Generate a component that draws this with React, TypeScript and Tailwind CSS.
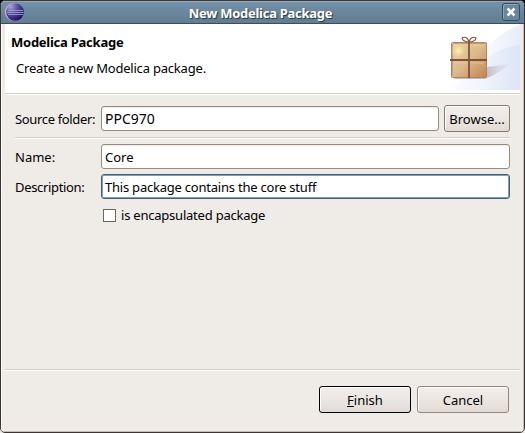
import React from "react";

function Field({ value, focused = false, className = "" }: { value: string; focused?: boolean; className?: string }) {
  return (
    <div
      className={
        "flex h-[25px] min-w-0 flex-1 items-center rounded-[3px] border bg-white pl-[3px] text-black " +
        (focused
          ? "border-[#475e72] shadow-[inset_0_0_0_1px_#7f9db5] "
          : "border-[#988b7d] shadow-[inset_0_1px_0_#eeebe7] ") +
        className
      }
    >
      {value}
    </div>
  );
}

function Button({ children, className }: { children: React.ReactNode; className: string }) {
  return (
    <div
      className={
        "flex h-[27px] items-center justify-center rounded-[3px] border bg-linear-to-b from-[#f1eeeb] via-[#ece7e3] to-[#e2dad4] shadow-[inset_1px_1px_0_#ffffff] " +
        className
      }
    >
      {children}
    </div>
  );
}

function Divider({ className = "" }: { className?: string }) {
  return <div className={"h-[2px] shrink-0 border-t border-[#d4d0c8] bg-white " + className} />;
}

function EclipseIcon() {
  return (
    <svg width="20" height="20" viewBox="0 0 20 20">
      <defs>
        <radialGradient id="orb" cx="0.25" cy="0.2" r="0.85">
          <stop offset="0" stopColor="#aaa4dc" />
          <stop offset="0.45" stopColor="#5a52a0" />
          <stop offset="1" stopColor="#1b1358" />
        </radialGradient>
      </defs>
      <circle cx="9.8" cy="10" r="9" fill="#c9a9d0" />
      <circle cx="11" cy="10" r="8.8" fill="url(#orb)" />
      <path d="M4 8.5h15M3 10.5h16.5M4 12.5h15" stroke="#a3a4e0" strokeWidth="0.8" />
    </svg>
  );
}

function PackageBanner() {
  return (
    <svg width="75" height="66" viewBox="0 0 75 66">
      <defs>
        <linearGradient id="sky" x1="0" x2="1">
          <stop offset="0" stopColor="#ffffff" />
          <stop offset="0.5" stopColor="#f5f8fd" />
          <stop offset="1" stopColor="#e6ecf9" />
        </linearGradient>
        <linearGradient id="wave" x1="0" x2="1">
          <stop offset="0" stopColor="#ffffff" />
          <stop offset="0.5" stopColor="#f1f4fc" />
          <stop offset="1" stopColor="#dce4f6" />
        </linearGradient>
        <linearGradient id="shade" gradientUnits="userSpaceOnUse" x1="40" y1="0" x2="66" y2="0">
          <stop offset="0" stopColor="#b3a2ae" />
          <stop offset="1" stopColor="#d5d5ea" stopOpacity="0.2" />
        </linearGradient>
        <linearGradient id="box" x1="0" y1="0" x2="1" y2="1">
          <stop offset="0" stopColor="#eed5a2" />
          <stop offset="0.5" stopColor="#dcb98c" />
          <stop offset="1" stopColor="#c28450" />
        </linearGradient>
        <radialGradient id="glow">
          <stop offset="0" stopColor="#fff4b4" />
          <stop offset="1" stopColor="#ead0a0" stopOpacity="0" />
        </radialGradient>
      </defs>
      <path d="M75 1C59 7 45 17 38 30L20 66H75Z" fill="url(#sky)" />
      <path d="M0 66C22 58 28 40 44 32C54 26 64 22 75 21V66Z" fill="url(#wave)" />
      <path d="M8 55H40C50 51 58 46 65 40L42 43Z" fill="url(#shade)" opacity="0.75" />
      <rect x="6.5" y="18.5" width="35" height="35" rx="1" fill="url(#box)" stroke="#ae8461" />
      <path d="M8 19.5H41M7.5 20V52" stroke="#c99c79" strokeWidth="1" />
      <path d="M9 21.5H22M26 21.5H39M9 39H22M26 39H39" stroke="#e9c9a3" strokeWidth="0.7" />
      <circle cx="13.5" cy="27" r="8" fill="url(#glow)" />
      <path d="M24 18V54M5 36H42" stroke="#81513f" strokeWidth="1.8" />
      <path d="M24 18C20 18 17 16 17 14C20 12 23 14 24 18C25 14 28 12 31 14C31 16 28 18 24 18" fill="#fff" stroke="#874f3d" strokeWidth="1.1" />
    </svg>
  );
}

export default function App() {
  return (
    <div className="h-[433px] w-[525px] bg-linear-to-b from-black from-50% to-[#efebe7] to-50% font-['Noto_Sans',sans-serif] text-[13px] leading-[18px] text-black">
      <div className="flex h-full flex-col overflow-hidden rounded-[5px] border border-[#3c3532] bg-[#efebe7]">
        <header className="flex h-[23px] shrink-0 items-center border-b border-[#3d4c57] bg-linear-to-b from-[#7692a8] via-[#6a879d] to-[#627d91] pr-[4px] pl-[3px] shadow-[inset_0_1px_0_#91a9ba]">
          <EclipseIcon />
          <div className="flex-1 pt-[2px] pr-[5px] text-center font-bold tracking-[-0.27px] text-white [text-shadow:1px_1px_1px_#263540]">
            New Modelica Package
          </div>
          <div className="flex size-[18px] items-center justify-center rounded-[3px] border border-[#344c5d] bg-[#68869c] shadow-[inset_1px_1px_0_#90a8b8]">
            <svg width="10" height="10" viewBox="0 0 10 10">
              <path d="M1.5 1.5L8.5 8.5M8.5 1.5L1.5 8.5" stroke="#fff" strokeWidth="2.5" />
            </svg>
          </div>
        </header>

        <main className="flex flex-1 flex-col border-r border-b border-l border-r-[#c9bdb3] border-b-[#c9bdb3] border-l-white px-[3px]">
          <section className="flex h-[69px] shrink-0 justify-between bg-white">
            <div className="pt-[9px] pl-[6px]">
              <h1 className="font-bold tracking-[-0.25px]">Modelica Package</h1>
              <p className="pt-[8px] pl-[5px] tracking-[-0.2px]">Create a new Modelica package.</p>
            </div>
            <PackageBanner />
          </section>
          <Divider />

          <section className="px-[10px] pt-[10px]">
            <div className="flex h-[27px] items-center">
              <div className="w-[86px] shrink-0 tracking-[-0.35px]">Source folder:</div>
              <Field value="PPC970" className="text-[14px]" />
              <Button className="ml-[5px] w-[66px] border-[#86786b]">Browse...</Button>
            </div>
            <Divider className="mt-[5px]" />
            <div className="mt-[5px] flex items-center">
              <div className="w-[86px] shrink-0">Name:</div>
              <Field value="Core" />
            </div>
            <div className="mt-[5px] flex items-center">
              <div className="w-[86px] shrink-0 tracking-[-0.33px]">Description:</div>
              <Field value="This package contains the core stuff" focused className="tracking-[-0.22px]" />
            </div>
            <div className="mt-[7px] flex items-center pl-[88px] tracking-[-0.22px]">
              <div className="mr-[5px] size-[13px] border border-[#70655c] bg-white" />
              is encapsulated package
            </div>
          </section>

          <div className="flex-1" />
          <Divider />
          <footer className="flex h-[60px] shrink-0 gap-[6px] pt-[15px] pr-[11px]">
            <Button className="ml-auto w-[92px] border-black">
              <span><span className="underline">F</span>inish</span>
            </Button>
            <Button className="w-[92px] border-[#94867a]">Cancel</Button>
          </footer>
        </main>
      </div>
    </div>
  );
}
